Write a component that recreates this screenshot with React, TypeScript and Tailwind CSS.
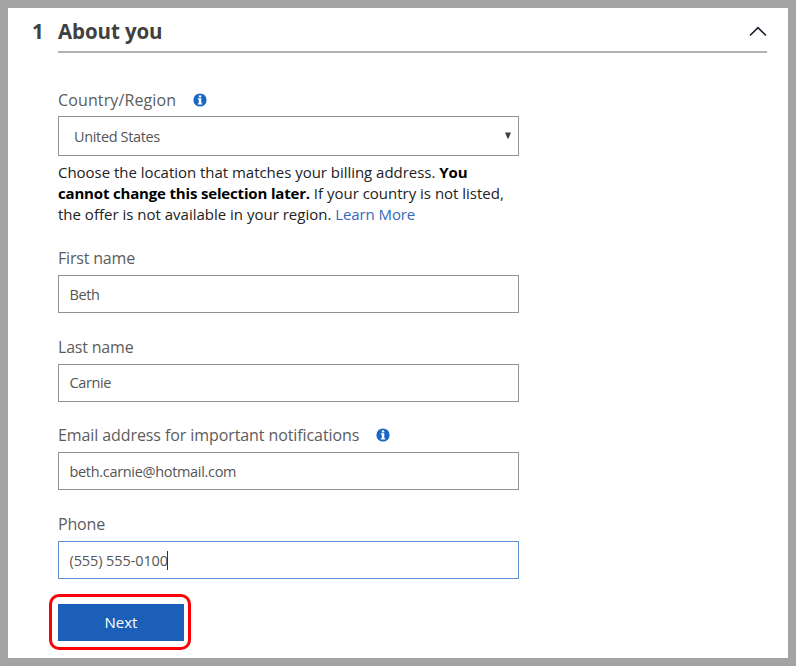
import type { ReactNode } from "react";

function InfoIcon() {
  return (
    <svg width="14" height="14" viewBox="0 0 14 14" className="block shrink-0" aria-label="Information">
      <circle cx="7" cy="7" r="6.6" fill="#1767c4" />
      <rect x="5.8" y="2.4" width="2.5" height="2" fill="#fff" />
      <path d="M4.8 5.3H8.3V10.2H9.2V11.4H4.8V10.2H5.8V6.4H4.8Z" fill="#fff" />
    </svg>
  );
}

function Label({ children, info }: { children: ReactNode; info?: boolean }) {
  return (
    <div className="flex h-6 items-center gap-[17px] text-[16px] whitespace-nowrap text-[#5c5c5c]">
      {children}
      {info && <InfoIcon />}
    </div>
  );
}

function Field({ children, active }: { children: ReactNode; active?: boolean }) {
  return (
    <div
      className={
        "flex h-[38px] w-[461px] items-center border pt-[1.5px] pl-[10.5px] text-[14.5px] whitespace-nowrap text-[#555] " +
        (active ? "border-[#5b8fd2]" : "border-[#929292]")
      }
    >
      {children}
    </div>
  );
}

export default function App() {
  return (
    <div className="h-[666px] w-[796px] bg-[#a3a3a3] p-2 font-['Open_Sans','Noto_Sans',sans-serif]">
      <main className="h-[650px] w-[780px] overflow-hidden bg-white pl-6">
        <header className="flex h-[45px] text-[20.5px] font-bold text-[#404040]">
          <span className="w-[26px] pt-[8px] leading-[30px]">1</span>
          <div className="flex w-[709px] justify-between border-b-2 border-[#b3b3b3] pt-[8px] leading-[30px]">
            <h1><span className="tracking-[-0.1px]">About you</span></h1>
            <svg width="18" height="12" viewBox="0 0 18 12" className="mt-[10px]" fill="none" stroke="#1c1c2b" strokeWidth="1.6">
              <path d="M1 9.5 9 1.7 17 9.5" />
            </svg>
          </div>
        </header>

        <form className="ml-[26px] pt-[35px]">
          <Label info><span className="tracking-[0.12px]">Country/Region</span></Label>
          <div className="mt-[4px] flex h-[40px] w-[461px] items-center justify-between border border-[#929292] pt-[2px] pr-[7px] pl-[15px] text-[14.5px] text-[#555]">
            <span className="tracking-[-0.35px]">United States</span>
            <svg width="6" height="7" viewBox="0 0 6 7" className="-mt-1">
              <path d="M0 .5H6L3.5 6.5H2.5Z" fill="#404040" />
            </svg>
          </div>
          <p className="mt-[6px] text-[15px] leading-[21px] whitespace-nowrap text-[#222]">
            <span className="tracking-[-0.03px]">Choose the location that matches your billing address. </span>
            <b className="tracking-[-0.1px] text-black">You</b>
            <br />
            <b className="tracking-[-0.17px] text-black">cannot change this selection later.</b>
            <span className="tracking-[-0.01px]"> If your country is not listed,</span>
            <br />
            <span className="tracking-[0px]">the offer is not available in your region. </span>
            <a className="tracking-[-0.1px] text-[#3567bd]">Learn More</a>
          </p>

          <div className="mt-[21px] flex flex-col gap-[21.6px]">
            <div className="flex flex-col gap-[5px]">
              <Label><span className="tracking-[-0.18px]">First name</span></Label>
              <Field><span className="tracking-[-0.4px]">Beth</span></Field>
            </div>
            <div className="flex flex-col gap-[5px]">
              <Label><span className="tracking-[-0.2px]">Last name</span></Label>
              <Field><span className="tracking-[-0.4px]">Carnie</span></Field>
            </div>
            <div className="flex flex-col gap-[5px]">
              <Label info><span className="tracking-[-0.09px]">Email address for important notifications</span></Label>
              <Field><span className="tracking-[-0.32px]">beth.carnie@hotmail.com</span></Field>
            </div>
            <div className="flex flex-col gap-[5px]">
              <Label><span className="tracking-[-0.18px]">Phone</span></Label>
              <Field active>
                <span className="tracking-[-0.1px]">(555) 555-0100</span>
                <span className="-ml-px h-[19px] w-px bg-[#333]" />
              </Field>
            </div>
          </div>

          <div className="mt-[15px] -ml-[9px] flex h-[56px] w-[142px] items-center justify-center rounded-[10px] border-[3px] border-[#fb0007] pt-px pl-px">
            <button type="button" className="h-[37px] w-[126px] bg-[#1b5fb8] pb-px pl-px text-[15px] text-white">
              Next
            </button>
          </div>
        </form>
      </main>
    </div>
  );
}
